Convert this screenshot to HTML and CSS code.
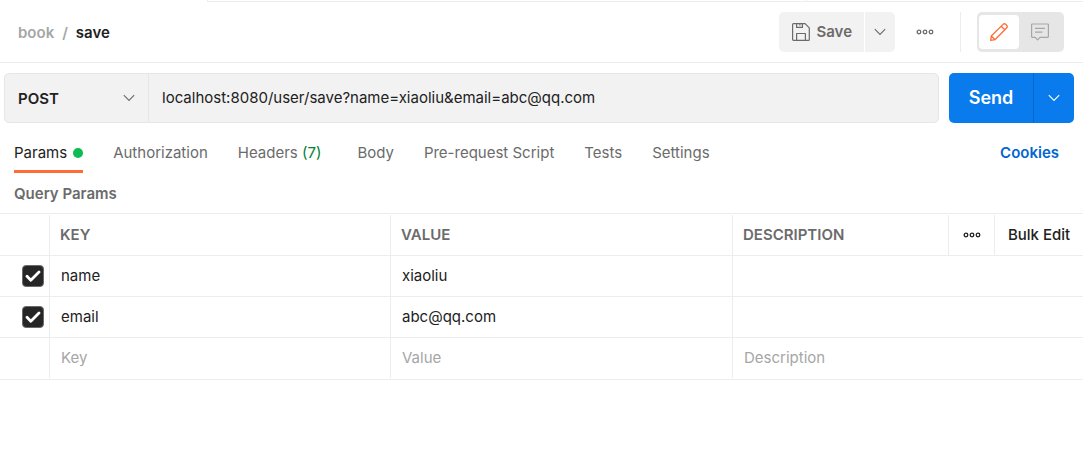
FILE: index.html
```
<!DOCTYPE html>
<html lang="en">
<head>
<meta charset="utf-8">
<meta name="viewport" content="width=device-width, initial-scale=1">
<title>book / save</title>
<link rel="stylesheet" href="styles.css">
</head>
<body>
<div class="tab-strip"><span class="tab-strip-active"></span><span class="tab-strip-rest"></span><span class="tab-strip-env"></span></div>

<header class="topbar">
  <nav class="breadcrumb" aria-label="Breadcrumb"><a class="crumb" href="#">book</a><span class="crumb">/</span><span class="crumb-current">save</span></nav>
  <div class="save-group">
    <button class="save-main" type="button">
      <svg width="18" height="18" viewBox="0 0 18 18" fill="none" stroke="currentColor" stroke-width="1.2" stroke-linejoin="round"><path d="M1.5.7h11.6l4.2 4.2v11.6a.9.9 0 0 1-.9.9H1.5a.9.9 0 0 1-.9-.9V1.6a.9.9 0 0 1 .9-.9z"/><path d="M4.6.8v3.6h5.8V.8M7.9.8v1.8M4.6 17.3v-6.8h8.8v6.8"/></svg>
      Save
    </button>
    <button class="save-more" type="button" aria-label="Save options"><svg width="12" height="8" viewBox="0 0 12 8" fill="none" stroke="currentColor" stroke-width="1.1"><path d="M.8 1.2 6 6.4l5.2-5.2"/></svg></button>
  </div>
  <button class="icon-button more" type="button" aria-label="More actions"><svg width="18" height="6" viewBox="0 0 18 6" fill="none" stroke="currentColor" stroke-width="1.3"><circle cx="3" cy="3" r="1.8"/><circle cx="9" cy="3" r="1.8"/><circle cx="15" cy="3" r="1.8"/></svg></button>
  <div class="mode-switch">
    <button class="mode mode-on" type="button" aria-label="Edit"><svg width="18" height="18" viewBox="0 0 18 18" fill="none" stroke="currentColor" stroke-width="1.3" stroke-linejoin="round"><path d="M.7 17.3 1.3 13 13 1.4a2 2 0 0 1 2.8 0l.8.8a2 2 0 0 1 0 2.8L5 16.7zM11.2 3.2l3.6 3.6M1.3 13 5 16.7"/></svg></button>
    <button class="mode" type="button" aria-label="Comments"><svg width="18" height="18" viewBox="0 0 18 18" fill="none" stroke="currentColor" stroke-width="1.2" stroke-linejoin="round"><path d="M1.3 1h15.4a.7.7 0 0 1 .7.7v12a.7.7 0 0 1-.7.7H9l-2.4 2.4-2.4-2.4H1.3a.7.7 0 0 1-.7-.7v-12a.7.7 0 0 1 .7-.7zM4 5.4h10M4 9.2h7.4"/></svg></button>
  </div>
</header>

<form class="request">
  <div class="url-box">
    <div class="method">
      <select class="method-select" aria-label="Method"><option>POST</option><option>GET</option></select>
      <svg class="method-arrow" width="12" height="8" viewBox="0 0 12 8" fill="none" stroke="currentColor" stroke-width="1.1"><path d="M.8 1.2 6 6.4l5.2-5.2"/></svg>
    </div>
    <input class="url" type="text" aria-label="Request URL" value="localhost:8080/user/save?name=xiaoliu&amp;email=abc@qq.com">
  </div>
  <div class="send-group">
    <button class="send-main" type="button">Send</button>
    <button class="send-more" type="button" aria-label="Send options"><svg width="12" height="8" viewBox="0 0 12 8" fill="none" stroke="currentColor" stroke-width="1.1"><path d="M.8 1.2 6 6.4l5.2-5.2"/></svg></button>
  </div>
</form>

<nav class="tabs" aria-label="Request sections">
  <a class="tab tab-active" href="#">Params<span class="dot"></span></a>
  <a class="tab" href="#">Authorization</a>
  <a class="tab tab-headers" href="#">Headers <span class="count">(7)</span></a>
  <a class="tab" href="#">Body</a>
  <a class="tab" href="#">Pre-request Script</a>
  <a class="tab" href="#">Tests</a>
  <a class="tab" href="#">Settings</a>
  <a class="cookies" href="#">Cookies</a>
</nav>

<h2 class="section-title">Query Params</h2>

<table class="params">
  <colgroup><col class="col-check"><col class="col-key"><col class="col-value"><col class="col-desc"><col class="col-more"><col class="col-bulk"></colgroup>
  <thead>
    <tr>
      <th></th><th>KEY</th><th>VALUE</th><th>DESCRIPTION</th>
      <th class="cell-more"><button class="icon-button" type="button" aria-label="Column options"><svg width="18" height="6" viewBox="0 0 18 6" fill="none" stroke="currentColor" stroke-width="1.3"><circle cx="3" cy="3" r="1.8"/><circle cx="9" cy="3" r="1.8"/><circle cx="15" cy="3" r="1.8"/></svg></button></th>
      <th class="cell-bulk"><button class="bulk" type="button">Bulk Edit</button></th>
    </tr>
  </thead>
  <tbody>
    <tr>
      <td><label class="check"><input class="check-box" type="checkbox" checked aria-label="Use name"><svg class="check-mark" width="16" height="12" viewBox="0 0 16 12" fill="none" stroke="currentColor" stroke-width="2.8" stroke-linecap="round" stroke-linejoin="round"><path d="m2 6.2 3.8 4L14 2"/></svg></label></td>
      <td><input class="field" type="text" aria-label="Key" value="name"></td>
      <td><input class="field" type="text" aria-label="Value" value="xiaoliu"></td>
      <td colspan="3"><input class="field" type="text" aria-label="Description"></td>
    </tr>
    <tr>
      <td><label class="check"><input class="check-box" type="checkbox" checked aria-label="Use email"><svg class="check-mark" width="16" height="12" viewBox="0 0 16 12" fill="none" stroke="currentColor" stroke-width="2.8" stroke-linecap="round" stroke-linejoin="round"><path d="m2 6.2 3.8 4L14 2"/></svg></label></td>
      <td><input class="field" type="text" aria-label="Key" value="email"></td>
      <td><input class="field" type="text" aria-label="Value" value="abc@qq.com"></td>
      <td colspan="3"><input class="field" type="text" aria-label="Description"></td>
    </tr>
    <tr>
      <td></td>
      <td><input class="field" type="text" aria-label="New key" placeholder="Key"></td>
      <td><input class="field" type="text" aria-label="New value" placeholder="Value"></td>
      <td colspan="3"><input class="field" type="text" aria-label="New description" placeholder="Description"></td>
    </tr>
  </tbody>
</table>
</body>
</html>
```

FILE: styles.css
```
* { box-sizing: border-box; }

body {
  margin: 0;
  background: #fff;
  color: #212121;
  font: 400 15px/20px Inter, "Liberation Sans", sans-serif;
}

button, input, select {
  margin: 0;
  padding: 0;
  border: 0;
  background: none;
  color: inherit;
  font: inherit;
}

button { cursor: pointer; }
a { color: inherit; text-decoration: none; }
svg { display: block; flex: none; }

/* Bottom edge of the open-documents strip */
.tab-strip { display: flex; height: 2px; }
.tab-strip-active { width: 208px; border-right: 1px solid #ededed; }
.tab-strip-rest { width: 599px; border-right: 1px solid #ededed; border-bottom: 1px solid #ededed; }
.tab-strip-env { flex: 1; border-bottom: 1px solid #ededed; }

/* Title row */
.topbar {
  display: flex;
  align-items: center;
  height: 61px;
  padding: 0 19px 0 18px;
  border-bottom: 1px solid #ededed;
}

.breadcrumb { display: flex; gap: 8px; margin-right: auto; padding-top: 2px; font-weight: 600; }
.crumb { color: #a6a6a6; }
.crumb-current { color: #212121; }

.save-group { display: flex; gap: 1px; height: 40px; color: #6b6b6b; }
.save-main {
  display: flex;
  align-items: center;
  gap: 6px;
  padding: 0 12px 0 13px;
  border-radius: 5px 0 0 5px;
  background: #f2f2f2;
  font-weight: 600;
}
.save-more {
  display: grid;
  place-items: center;
  width: 30px;
  border-radius: 0 5px 5px 0;
  background: #f2f2f2;
}

.icon-button { display: grid; place-items: center; width: 46px; height: 40px; color: #212121; }
.more { width: 66px; margin-right: -1px; padding-right: 6px; border-right: 1px solid #ededed; color: #6b6b6b; }

.mode-switch {
  display: flex;
  height: 40px;
  margin-left: 17px;
  padding: 3px 2px;
  border-radius: 5px;
  background: #e6e6e6;
}
.mode { display: grid; place-items: center; width: 43px; padding-right: 2px; border-radius: 4px; color: #a6a6a6; }
.mode-on { width: 40px; padding: 0; background: #fff; color: #ff6c37; }

/* Method, URL and send */
.request { display: flex; gap: 10px; height: 50px; margin: 10px 9px 0 4px; }
.url-box {
  display: flex;
  flex: 1;
  border: 1px solid #e6e6e6;
  border-radius: 5px;
  background: #f2f2f2;
}
.method { display: grid; width: 144px; border-right: 1px solid #e6e6e6; }
.method-select {
  grid-area: 1 / 1;
  appearance: none;
  padding: 2px 0 0 13px;
  font-weight: 600;
  outline: none;
}
.method-arrow {
  grid-area: 1 / 1;
  place-self: center end;
  margin-right: 13px;
  color: #6b6b6b;
  pointer-events: none;
}
.url { flex: 1; min-width: 0; padding: 0 13px; outline: none; }

.send-group { display: flex; color: #fff; }
.send-main {
  width: 85px;
  border-right: 1px solid #0569d1;
  border-radius: 5px 0 0 5px;
  background: #097bed;
  font-size: 18px;
  font-weight: 600;
}
.send-more {
  display: grid;
  place-items: center;
  width: 40px;
  border-radius: 0 5px 5px 0;
  background: #097bed;
}

/* Request sections */
.tabs { display: flex; gap: 30px; margin-top: 10px; padding: 0 24px 0 14px; line-height: 40px; color: #6b6b6b; }
.tab { white-space: nowrap; }
.tab-headers { margin-right: 6px; }
.tab-active {
  display: flex;
  align-items: center;
  gap: 6px;
  height: 40px;
  box-shadow: inset 0 -3px #ff6c37;
  color: #212121;
}
.dot { width: 10px; height: 10px; border-radius: 50%; background: #0cbb52; }
.count { color: #007f31; }
.cookies { margin-left: auto; color: #0265d2; font-weight: 600; }

.section-title { margin: 0; padding: 11px 14px 9px; color: #6b6b6b; font-size: 15px; font-weight: 600; }

/* Parameter table */
.params {
  width: 100%;
  padding: 1px 0;
  border-top: 1px solid #ededed;
  border-bottom: 1px solid #ededed;
  border-spacing: 0;
  table-layout: fixed;
}
.col-check { width: 50px; }
.col-key { width: 341px; }
.col-value { width: 342px; }
.col-more { width: 46px; }
.col-bulk { width: 88px; }

.params th, .params td { height: 41px; padding: 0; border-right: 1px solid #ededed; border-bottom: 1px solid #ededed; }
.params th { padding-left: 10px; color: #6b6b6b; font-weight: 600; text-align: left; }
.params tr > :last-child { border-right: 0; }
.params tbody tr:last-child td { height: 40px; border-bottom: 0; }
.params .cell-more { padding: 0; }
.params .cell-bulk { padding: 0; text-align: center; white-space: nowrap; }
.cell-more .icon-button { width: 100%; }
.bulk { color: #212121; font-weight: 500; }

.field { display: block; width: 100%; height: 39px; padding: 0 11px 2px; outline: none; }
.field::placeholder { color: #a6a6a6; opacity: 1; }

.check { display: grid; width: 22px; height: 22px; margin-left: 22px; place-items: center; color: #fff; }
.check-box {
  grid-area: 1 / 1;
  appearance: none;
  width: 22px;
  height: 22px;
  margin: 0;
  border: 1px solid #6b6b6b;
  border-radius: 4px;
}
.check-box:checked { background: #262626; }
.check-mark { grid-area: 1 / 1; z-index: 1; visibility: hidden; pointer-events: none; }
.check-box:checked + .check-mark { visibility: visible; }
```
